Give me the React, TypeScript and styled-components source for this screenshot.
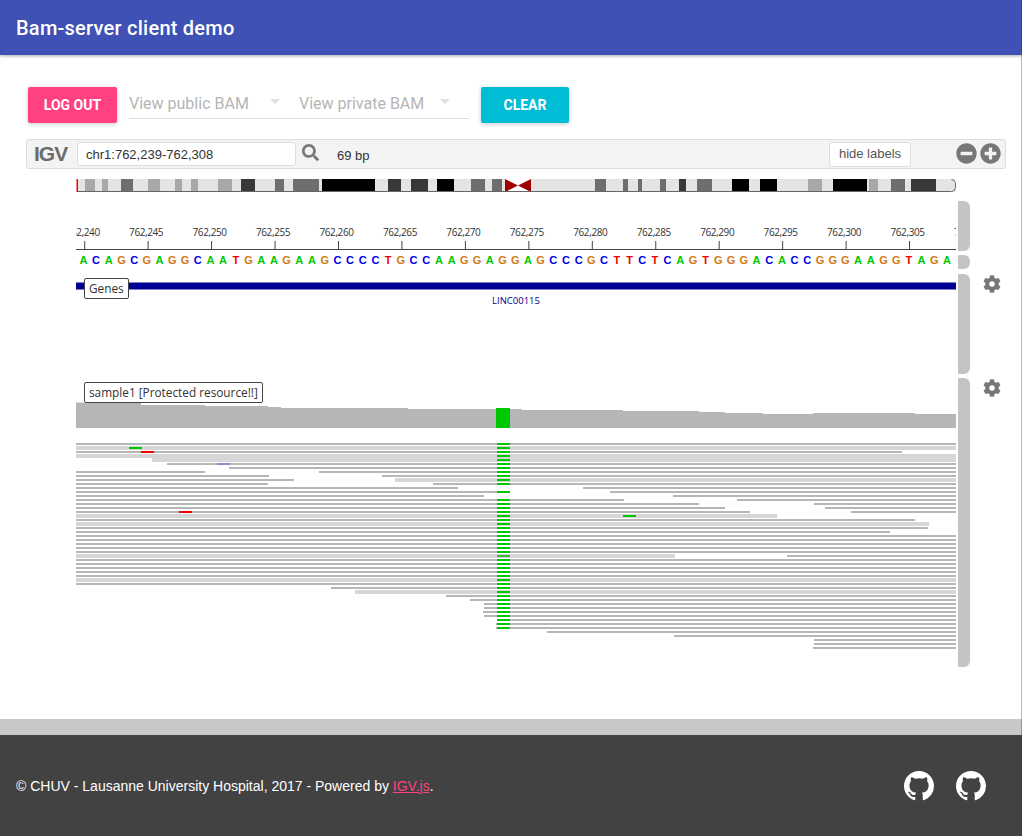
import React from 'react';
import styled, { createGlobalStyle } from 'styled-components';
import { FaCog, FaMinusCircle, FaPlusCircle, FaSearch } from 'react-icons/fa';

const GlobalStyle = createGlobalStyle`
  * {
    box-sizing: border-box;
  }
  html,
  body {
    margin: 0;
    padding: 0;
    background: #fff;
  }
`;

const Page = styled.div`
  position: relative;
  display: flex;
  flex-direction: column;
  width: 1022px;
  height: 836px;
  overflow: hidden;
  font-family: Roboto, sans-serif;
  &::after {
    content: '';
    position: absolute;
    top: 0;
    right: 0;
    bottom: 0;
    width: 1px;
    background: rgba(40, 50, 70, 0.35);
  }
`;

const AppBar = styled.header`
  flex: none;
  display: flex;
  align-items: center;
  height: 55px;
  padding: 0 16px;
  background: #3f51b5;
  box-shadow: 0 1px 3px rgba(0, 0, 0, 0.35);
  color: #fff;
  font-size: 20px;
  font-weight: 500;
  letter-spacing: 0.24px;
`;

const Main = styled.main`
  flex: 1;
`;

const Controls = styled.div`
  display: flex;
  align-items: flex-start;
  height: 36px;
  margin: 32px 0 16px 28px;
`;

const ActionButton = styled.button<{ $color: string; $width: number }>`
  width: ${(props) => props.$width}px;
  height: 36px;
  padding: 0;
  border: 0;
  border-radius: 2px;
  background: ${(props) => props.$color};
  box-shadow: 0 1px 4px rgba(0, 0, 0, 0.22);
  color: #fff;
  font-family: Roboto, sans-serif;
  font-size: 14px;
  font-weight: 700;
`;

const SelectGroup = styled.div`
  display: flex;
  width: 340px;
  height: 32px;
  margin: 0 12px;
  border-bottom: 1px solid #e0e0e0;
`;

const SelectField = styled.div`
  display: flex;
  align-items: center;
  width: 170px;
  height: 32px;
  color: #b5b5b5;
  font-size: 16px;
`;

const SelectLabel = styled.span`
  width: 141px;
  white-space: nowrap;
`;

const SelectArrow = styled.span`
  width: 0;
  height: 0;
  margin-top: -3px;
  border-left: 5px solid transparent;
  border-right: 5px solid transparent;
  border-top: 5px solid #e0e0e0;
`;

const NavBar = styled.div`
  display: flex;
  align-items: center;
  height: 30px;
  margin: 0 16px 0 26px;
  padding: 0 4px 0 7px;
  border: 1px solid #ddd;
  border-radius: 3px;
  background: #f3f3f3;
  color: #444;
  font-family: 'Liberation Sans', sans-serif;
  font-size: 13px;
`;

const Logo = styled.span`
  width: 34px;
  color: #6c6c6c;
  font-size: 21px;
  font-weight: 700;
  letter-spacing: -1px;
`;

const LocusInput = styled.div`
  width: 219px;
  height: 24px;
  margin-left: 9px;
  padding-left: 8px;
  border: 1px solid #ddd;
  border-radius: 3px;
  background: #fff;
  color: #333;
  line-height: 24px;
`;

const SearchButton = styled.span`
  display: flex;
  margin: -4px 0 0 6px;
  color: #777;
`;

const BpCount = styled.span`
  margin: 2px 0 0 18px;
  color: #333;
`;

const LabelToggle = styled.div`
  width: 82px;
  height: 25px;
  margin-left: auto;
  border: 1px solid #ddd;
  border-radius: 3px;
  background: #fff;
  color: #555;
  line-height: 22px;
  text-align: center;
`;

const ZoomButtons = styled.div`
  display: flex;
  gap: 3px;
  margin: -1px 0 0 45px;
  color: #777;
`;

const Ideogram = styled.svg`
  display: block;
  margin: 10px 0 9px 76px;
`;

const Tracks = styled.div`
  margin-left: 76px;
`;

const TrackRow = styled.div<{ $height: number; $gap: number }>`
  display: flex;
  height: ${(props) => props.$height}px;
  margin-bottom: ${(props) => props.$gap}px;
`;

const Viewport = styled.div`
  position: relative;
  width: 880px;
  height: 100%;
`;

const TrackSvg = styled.svg`
  display: block;
  overflow: hidden;
`;

const TrackScroll = styled.div`
  width: 12px;
  height: 100%;
  margin-left: 2px;
  border-radius: 1px 6px 6px 1px;
  background: #c4c4c4;
`;

const GearCell = styled.div`
  padding: 1px 0 0 13px;
  color: #777;
`;

const TrackLabel = styled.div<{ $top: number }>`
  position: absolute;
  top: ${(props) => props.$top}px;
  left: 8px;
  height: 21px;
  padding: 0 4px;
  border: 1px solid #444;
  border-radius: 2px;
  background: #fff;
  color: #333;
  font-family: 'Open Sans', sans-serif;
  font-size: 11.8px;
  line-height: 19px;
  white-space: nowrap;
`;

const RulerText = styled.text`
  fill: #333;
  font-family: 'Open Sans', sans-serif;
  font-size: 10px;
  letter-spacing: -0.4px;
`;

const BaseText = styled.text`
  font-family: 'Liberation Sans', sans-serif;
  font-size: 11px;
  font-weight: 700;
`;

const GeneText = styled.text`
  fill: #00008b;
  font-family: 'Open Sans', sans-serif;
  font-size: 9.5px;
`;

const FooterBand = styled.div`
  flex: none;
  height: 16px;
  background: #c8c8c8;
`;

const Footer = styled.footer`
  flex: none;
  display: flex;
  align-items: center;
  justify-content: space-between;
  height: 101px;
  padding: 0 36px 0 16px;
  background: #424242;
  color: #fff;
  font-family: 'Liberation Sans', sans-serif;
  font-size: 14px;
`;

const FooterLink = styled.a`
  color: #ff4081;
  text-decoration: underline;
`;

const FooterIcons = styled.div`
  display: flex;
  gap: 22px;
`;

const GithubMark = () => (
  <svg width={30} height={30} viewBox="0 0 16 16" fill="#fff">
    <path d="M8 0C3.58 0 0 3.58 0 8c0 3.54 2.29 6.53 5.47 7.59.4.07.55-.17.55-.38 0-.19-.01-.82-.01-1.49-2.01.37-2.53-.49-2.69-.94-.09-.23-.48-.94-.82-1.13-.28-.15-.68-.52-.01-.53.63-.01 1.08.58 1.23.82.72 1.21 1.87.87 2.33.66.07-.52.28-.87.51-1.07-1.78-.2-3.64-.89-3.64-3.95 0-.87.31-1.59.82-2.15-.08-.2-.36-1.02.08-2.12 0 0 .67-.21 2.2.82.64-.18 1.32-.27 2-.27.68 0 1.36.09 2 .27 1.53-1.04 2.2-.82 2.2-.82.44 1.1.16 1.92.08 2.12.51.56.82 1.27.82 2.15 0 3.07-1.87 3.75-3.65 3.95.29.25.54.73.54 1.48 0 1.07-.01 1.93-.01 2.2 0 .21.15.46.55.38A8.013 8.013 0 0016 8c0-4.42-3.58-8-8-8z" />
  </svg>
);

const L = '#e4e4e4';
const G1 = '#a8a8a8';
const G2 = '#6e6e6e';
const G3 = '#383838';
const K = '#000';

// cytoband stops, in page x: [start, end, colour]
const bands: [number, number, string][] = [
  [77, 85, L], [85, 95, G1], [95, 102, L], [102, 108, G1], [108, 121, L], [121, 133, G2], [133, 148, L],
  [148, 160, G1], [160, 175, L], [175, 182, G1], [182, 191, L], [191, 198, G1], [198, 218, L], [218, 232, G1],
  [232, 241, L], [241, 255, G3], [255, 275, L], [275, 284, G2], [284, 293, L], [293, 319, G2], [319, 322, L],
  [322, 375, K], [375, 388, L], [388, 401, G3], [401, 411, L], [411, 428, G3], [428, 437, L], [437, 454, K],
  [454, 471, L], [471, 485, G2], [485, 492, L], [492, 502, G2], [502, 505, L], [531, 595, L], [595, 606, G2],
  [606, 623, L], [623, 628, G2], [628, 638, L], [638, 642, G2], [642, 660, L], [660, 666, G2], [666, 679, L],
  [679, 686, G3], [686, 697, L], [697, 712, G2], [712, 732, L], [732, 749, K], [749, 760, L], [760, 777, K],
  [777, 808, L], [808, 822, G1], [822, 833, L], [833, 867, K], [867, 869, L], [869, 878, G1], [878, 891, L],
  [891, 905, G2], [905, 911, L], [911, 936, G3], [936, 955, L],
];

const rulerTicks = Array.from({ length: 15 }, (_, i) => ({
  x: 8.7 + i * 63.45,
  label: (762240 + i * 5).toLocaleString('en-US'),
}));

const sequence = 'ACAGCGAGGCAATGAAGAAGCCCCTGCCAAGGAGGAGCCCGCTTCTCAGTGGGACACCGGGAAGGTAGAC';
const baseColors: Record<string, string> = { A: '#00c800', C: '#0000e0', G: '#d17a14', T: '#f00000' };

// coverage steps: [start, end, top]
const coverage: [number, number, number][] = [
  [76, 141, 402.5], [141, 205, 405], [205, 268, 406], [268, 281, 407], [281, 408, 408], [408, 522, 409],
  [522, 623, 410], [623, 699, 411], [699, 725, 412], [725, 763, 413], [763, 813, 414], [813, 915, 413],
  [915, 956, 414],
];

type Read = [number, number, boolean?];

// one entry per pileup row, 4px apart, in page x
const rows: Read[][] = [
  [[76, 956]],
  [[76, 956, true]],
  [[76, 902]],
  [[76, 956, true]],
  [[152, 956, true]],
  [[167, 956]],
  [[229, 956]],
  [[76, 205], [319, 956]],
  [[76, 269], [382, 956]],
  [[76, 294], [395, 956, true]],
  [[76, 268], [433, 956]],
  [[76, 458], [583, 956]],
  [[76, 510], [610, 956]],
  [[76, 484], [673, 956]],
  [[76, 624], [737, 956]],
  [[76, 699], [814, 956]],
  [[76, 725], [825, 956]],
  [[76, 750], [851, 956]],
  [[76, 777, true]],
  [[76, 915]],
  [[76, 929, true]],
  [[76, 928]],
  [[76, 890]],
  [[76, 956]],
  [[76, 956]],
  [[76, 956]],
  [[76, 956]],
  [[76, 956]],
  [[76, 675, true], [787, 956]],
  [[76, 956]],
  [[76, 956]],
  [[76, 956]],
  [[76, 956]],
  [[76, 956]],
  [[76, 956, true]],
  [[76, 956]],
  [[331, 956]],
  [[355, 956, true]],
  [[446, 956]],
  [[470, 956]],
  [[484, 956]],
  [[484, 956]],
  [[483, 956]],
  [[484, 956]],
  [[497, 956]],
  [[496, 956]],
  [[496, 956]],
  [[547, 956]],
  [[674, 956]],
  [[814, 956]],
  [[814, 956]],
  [[813, 956]],
];

const mismatches: { row: number; x: number; color: string }[] = [
  { row: 1, x: 129, color: '#00c800' },
  { row: 2, x: 141, color: '#f00000' },
  { row: 5, x: 217, color: '#9090c0' },
  { row: 17, x: 179, color: '#f00000' },
  { row: 18, x: 623, color: '#00c800' },
];

const noSnpRows = [11, 13];
const rowY = (row: number) => 65 + row * 4;

const AlignmentTrack: React.FC = () => (
  <TrackSvg width={880} height={289}>
    {coverage.map(([from, to, top]) => (
      <rect key={from} x={from - 76} y={top - 378} width={to - from} height={428 - top} fill="#b6b6b6" />
    ))}
    <rect x={420} y={30} width={14} height={20} fill="#00c800" />
    {rows.map((reads, row) =>
      reads.map(([from, to, light]) => (
        <rect
          key={`${row}-${from}`}
          x={from - 76}
          y={light ? rowY(row) - 1 : rowY(row)}
          width={to - from}
          height={light ? 4 : 2}
          fill={light ? '#d6d6d6' : '#b6b6b6'}
        />
      )),
    )}
    {mismatches.map((m) => (
      <rect key={m.row} x={m.x - 76} y={rowY(m.row)} width={13} height={2} fill={m.color} />
    ))}
    {rows.slice(0, 47).map((_, row) =>
      noSnpRows.includes(row) ? null : (
        <rect key={row} x={421} y={rowY(row)} width={13} height={2} fill={row === 28 ? '#3cb83c' : '#00c800'} />
      ),
    )}
  </TrackSvg>
);

const App: React.FC = () => {
  return (
    <Page>
      <GlobalStyle />
      <AppBar>Bam-server client demo</AppBar>
      <Main>
        <Controls>
          <ActionButton $color="#ff4081" $width={89}>
            LOG OUT
          </ActionButton>
          <SelectGroup>
            <SelectField>
              <SelectLabel>View public BAM</SelectLabel>
              <SelectArrow />
            </SelectField>
            <SelectField>
              <SelectLabel>View private BAM</SelectLabel>
              <SelectArrow />
            </SelectField>
          </SelectGroup>
          <ActionButton $color="#00bcd4" $width={88}>
            CLEAR
          </ActionButton>
        </Controls>
        <NavBar>
          <Logo>IGV</Logo>
          <LocusInput>chr1:762,239-762,308</LocusInput>
          <SearchButton>
            <FaSearch size={17} />
          </SearchButton>
          <BpCount>69 bp</BpCount>
          <LabelToggle>hide labels</LabelToggle>
          <ZoomButtons>
            <FaMinusCircle size={21} />
            <FaPlusCircle size={21} />
          </ZoomButtons>
        </NavBar>
        <Ideogram width={880} height={13}>
          <defs>
            <clipPath id="chromosome">
              <rect x={1} y={0} width={879} height={13} rx={4} />
            </clipPath>
          </defs>
          <g clipPath="url(#chromosome)">
            {bands.map(([from, to, color]) => (
              <rect key={from} x={from - 76} y={0} width={to - from} height={13} fill={color} />
            ))}
            <path d="M429 0 L442 6.5 L429 13 Z M455 0 L442 6.5 L455 13 Z" fill="#a00000" />
          </g>
          <path d="M1 12.5 H875.5 A4 4 0 0 0 879.5 8.5 V4.5 A4 4 0 0 0 875.5 0.5" fill="none" stroke="#666" />
          <rect x={0.5} y={0} width={1.5} height={13} fill="#f00" />
        </Ideogram>
        <Tracks>
          <TrackRow $height={50} $gap={4}>
            <Viewport>
              <TrackSvg width={880} height={50}>
                <line x1={0} x2={880} y1={48.5} y2={48.5} stroke="#444" />
                {rulerTicks.map((tick) => (
                  <g key={tick.label}>
                    <line x1={tick.x} x2={tick.x} y1={40} y2={48} stroke="#444" />
                    <RulerText x={tick.x - 2} y={35} textAnchor="middle">
                      {tick.label}
                    </RulerText>
                  </g>
                ))}
              </TrackSvg>
            </Viewport>
            <TrackScroll />
          </TrackRow>
          <TrackRow $height={14} $gap={5}>
            <Viewport>
              <TrackSvg width={880} height={14}>
                {sequence.split('').map((base, i) => (
                  <BaseText key={i} x={7.4 + i * 12.7} y={9} textAnchor="middle" fill={baseColors[base]}>
                    {base}
                  </BaseText>
                ))}
              </TrackSvg>
            </Viewport>
            <TrackScroll />
          </TrackRow>
          <TrackRow $height={100} $gap={4}>
            <Viewport>
              <TrackSvg width={880} height={100}>
                <rect x={0} y={8.5} width={880} height={7} fill="#000096" />
                <GeneText x={440} y={29.5} textAnchor="middle">
                  LINC00115
                </GeneText>
              </TrackSvg>
              <TrackLabel $top={4}>Genes</TrackLabel>
            </Viewport>
            <TrackScroll />
            <GearCell>
              <FaCog size={18} />
            </GearCell>
          </TrackRow>
          <TrackRow $height={289} $gap={0}>
            <Viewport>
              <AlignmentTrack />
              <TrackLabel $top={4}>sample1 [Protected resource!!]</TrackLabel>
            </Viewport>
            <TrackScroll />
            <GearCell>
              <FaCog size={18} />
            </GearCell>
          </TrackRow>
        </Tracks>
      </Main>
      <FooterBand />
      <Footer>
        <span>
          © CHUV - Lausanne University Hospital, 2017 - Powered by <FooterLink href="#igv">IGV.js</FooterLink>.
        </span>
        <FooterIcons>
          <GithubMark />
          <GithubMark />
        </FooterIcons>
      </Footer>
    </Page>
  );
};

export default App;
